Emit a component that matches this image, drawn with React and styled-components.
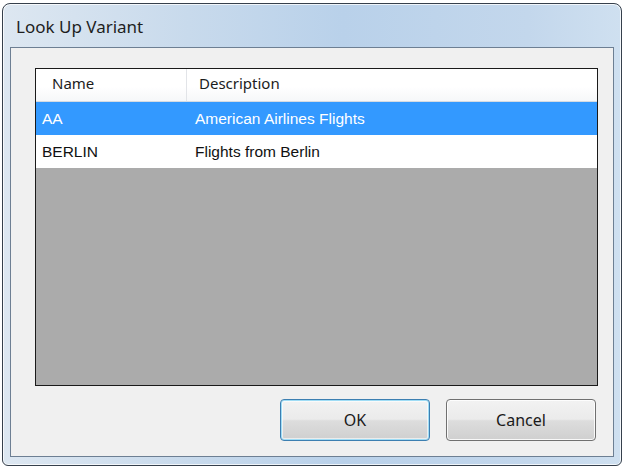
import React from "react";
import styled, { createGlobalStyle } from "styled-components";

const Global = createGlobalStyle`
  html, body {
    margin: 0;
    padding: 0;
    background: #ffffff;
  }
`;

const Window = styled.div`
  box-sizing: border-box;
  width: 620px;
  height: 463px;
  margin: 3px 0 0 2px;
  border: 1px solid #36404c;
  border-radius: 8px 8px 6px 6px;
  background: linear-gradient(90deg, #dde7f1 0%, #c8daec 30%, #b9d1ea 55%, #c3d7ec 85%, #cfe0f0 100%);
  box-shadow: inset 0 0 0 1px rgba(255, 255, 255, 0.75);
  padding: 0 7px 8px 7px;
  display: flex;
  flex-direction: column;
`;

const TitleBar = styled.div`
  height: 43px;
  display: flex;
  align-items: center;
  padding-left: 6px;
  padding-top: 2px;
  font-family: "Noto Sans", "Open Sans", sans-serif;
  font-size: 17px;
  color: #1e1e1e;
  box-sizing: border-box;
`;

const Client = styled.div`
  flex: 1;
  border: 1px solid #6d7f93;
  background: #f0f0f0;
  padding: 20px 15px 15px 24px;
  display: flex;
  flex-direction: column;
`;

const List = styled.div`
  height: 318px;
  box-sizing: border-box;
  border: 1px solid #1a1a1a;
  background: #ababab;
  display: flex;
  flex-direction: column;
`;

const Header = styled.div`
  display: grid;
  grid-template-columns: 151px 1fr;
  height: 33px;
  box-sizing: border-box;
  background: linear-gradient(#ffffff 0%, #ffffff 55%, #f6f7f9 100%);
  border-bottom: 1px solid #d5dbe2;
  font-family: "Noto Sans", "Open Sans", sans-serif;
  font-size: 15px;
  color: #1c1c1c;
`;

const HeadCell = styled.div`
  display: flex;
  align-items: center;
  padding-left: ${(p) => p.$pad}px;
  padding-bottom: 4px;
  border-right: ${(p) => (p.$sep ? "1px solid #e2e4e8" : "none")};
`;

const Row = styled.div`
  display: grid;
  grid-template-columns: 151px 1fr;
  height: 33px;
  align-items: center;
  background: ${(p) => (p.$selected ? "#3399ff" : "#ffffff")};
  color: ${(p) => (p.$selected ? "#ffffff" : "#111111")};
  font-family: "Liberation Sans", Arial, sans-serif;
  font-size: 15.5px;
`;

const Cell = styled.div`
  padding-left: ${(p) => p.$pad}px;
`;

const Buttons = styled.div`
  margin-top: auto;
  display: flex;
  justify-content: flex-end;
  gap: 16px;
  padding-right: 2px;
`;

const Button = styled.button`
  width: 150px;
  height: 42px;
  box-sizing: border-box;
  border-radius: 4px;
  border: 1px solid ${(p) => (p.$default ? "#3c7fb1" : "#707070")};
  background: linear-gradient(#f2f2f2 0%, #ebebeb 48%, #dddddd 52%, #cfcfcf 100%);
  box-shadow: ${(p) =>
    p.$default
      ? "inset 0 0 0 1px #9fdcf5, inset 0 0 0 2px rgba(255,255,255,0.6)"
      : "inset 0 0 0 1px rgba(255,255,255,0.85)"};
  font-family: "Noto Sans", "Open Sans", sans-serif;
  font-size: 16px;
  color: #1a1a1a;
  padding: 0;
`;

const rows = [
  { name: "AA", desc: "American Airlines Flights", selected: true },
  { name: "BERLIN", desc: "Flights from Berlin", selected: false },
];

const App = () => {
  return (
    <>
      <Global />
      <Window>
        <TitleBar>Look Up Variant</TitleBar>
        <Client>
          <List>
            <Header>
              <HeadCell $pad={16} $sep>Name</HeadCell>
              <HeadCell $pad={12}>Description</HeadCell>
            </Header>
            {rows.map((r) => (
              <Row key={r.name} $selected={r.selected}>
                <Cell $pad={6}>{r.name}</Cell>
                <Cell $pad={8}>{r.desc}</Cell>
              </Row>
            ))}
          </List>
          <Buttons>
            <Button $default>OK</Button>
            <Button>Cancel</Button>
          </Buttons>
        </Client>
      </Window>
    </>
  );
};

export default App;
